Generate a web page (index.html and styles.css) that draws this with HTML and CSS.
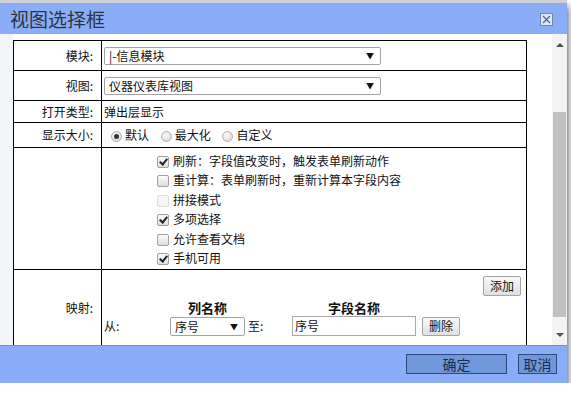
FILE: index.html
```html
<!DOCTYPE html>
<html lang="zh-CN">
<head>
  <meta charset="UTF-8">
  <title>视图选择框</title>
  <link rel="stylesheet" href="styles.css">
</head>
<body>

  <div class="dialog">
    <div class="titlebar">
      <span class="title">视图选择框</span>
      <span class="close" title="关闭">
        <svg width="13" height="13" viewBox="0 0 13 13">
          <rect x="0.5" y="0.5" width="12" height="12" fill="#dfe7f7" stroke="#7186ad"/>
          <path d="M3 3 L10 10 M10 3 L3 10" stroke="#4d5e80" stroke-width="1.2"/>
        </svg>
      </span>
    </div>

    <div class="main">
      <div class="content">
        <table class="form-table">
          <colgroup>
            <col class="col-label">
            <col>
          </colgroup>
          <tr class="row-select">
            <td class="label">模块:</td>
            <td><div class="select wide">|-信息模块<span class="arrow">▼</span></div></td>
          </tr>
          <tr class="row-select">
            <td class="label">视图:</td>
            <td><div class="select wide">仪器仪表库视图<span class="arrow">▼</span></div></td>
          </tr>
          <tr class="row-text">
            <td class="label">打开类型:</td>
            <td class="value">弹出层显示</td>
          </tr>
          <tr class="row-radio">
            <td class="label">显示大小:</td>
            <td class="value">
              <span class="radio checked"></span><span class="radio-text">默认</span>
              <span class="radio"></span><span class="radio-text">最大化</span>
              <span class="radio"></span><span class="radio-text">自定义</span>
            </td>
          </tr>
          <tr class="row-checks">
            <td></td>
            <td class="checks">
              <div class="check-line"><span class="checkbox checked"></span>刷新：字段值改变时，触发表单刷新动作</div>
              <div class="check-line"><span class="checkbox"></span>重计算：表单刷新时，重新计算本字段内容</div>
              <div class="check-line"><span class="checkbox disabled"></span>拼接模式</div>
              <div class="check-line"><span class="checkbox checked"></span>多项选择</div>
              <div class="check-line"><span class="checkbox"></span>允许查看文档</div>
              <div class="check-line"><span class="checkbox checked"></span>手机可用</div>
            </td>
          </tr>
          <tr class="row-map">
            <td class="label map-label">映射:</td>
            <td class="map-cell">
              <div class="add-line"><button class="btn">添加</button></div>
              <div class="map-line map-head">
                <span class="c-from"></span>
                <span class="c-col">列名称</span>
                <span class="c-to"></span>
                <span class="c-field">字段名称</span>
              </div>
              <div class="map-line">
                <span class="c-from">从:</span>
                <div class="select c-col small">序号<span class="arrow">▼</span></div>
                <span class="c-to">至:</span>
                <div class="input c-field">序号</div>
                <button class="btn del">删除</button>
              </div>
              <div class="map-spacer"></div>
            </td>
          </tr>
        </table>
      </div>

      <div class="scrollbar">
        <div class="sb-arrow up"></div>
        <div class="sb-track">
          <div class="sb-thumb"></div>
        </div>
        <div class="sb-arrow down"></div>
      </div>
    </div>

    <div class="footer">
      <button class="fbtn ok">确定</button>
      <button class="fbtn cancel">取消</button>
    </div>
  </div>

</body>
</html>
```

FILE: styles.css
```css
body {
  margin: 0;
  background: #ffffff;
  font-family: "Noto Sans CJK SC", "Liberation Sans", sans-serif;
  font-size: 12px;
  color: #111;
  overflow: hidden;
}

.dialog {
  width: 567px;
  height: 380px;
  border-top: 3px solid #cfd1d6;
  box-shadow: 1px 6px 7px rgba(40, 40, 60, 0.8);
  display: flex;
  flex-direction: column;
}

/* title bar */
.titlebar {
  height: 31px;
  background: #8badf7;
  display: flex;
  align-items: center;
  justify-content: space-between;
  padding: 0 14px 0 10px;
}

.title {
  font-size: 19px;
  color: #2e3340;
  line-height: 31px;
}

.close {
  display: flex;
  margin-top: 1px;
}

/* body area */
.main {
  height: 311px;
  display: flex;
  overflow: hidden;
  background: #fff;
}

.content {
  width: 552px;
  padding: 6px 0 0 13px;
  box-sizing: border-box;
  background: linear-gradient(to right, #f3f5f9 13px, #fff 13px);
}

.form-table {
  width: 514px;
  border-collapse: collapse;
  table-layout: fixed;
  background: #fff;
}

.col-label {
  width: 88px;
}

.form-table td {
  border: 1px solid #000;
  padding: 0 0 0 2px;
  line-height: 14px;
}

.form-table td.label {
  text-align: right;
  padding: 0 8px 0 0;
}

.row-select td {
  height: 29px;
}

.row-text td {
  height: 21px;
}

.row-radio td {
  height: 24px;
}

.select {
  height: 18px;
  border: 1px solid #a3a3a3;
  border-radius: 2px;
  box-sizing: border-box;
  background: #fff;
  position: relative;
  line-height: 16px;
  padding-left: 4px;
}

.select.wide {
  width: 277px;
  margin-top: 1px;
}

.arrow {
  position: absolute;
  right: 6px;
  top: 0;
  font-size: 8px;
  color: #111;
}

/* radios */
.radio {
  display: inline-block;
  width: 11px;
  height: 11px;
  border-radius: 50%;
  border: 1px solid #b0b0b0;
  background: radial-gradient(circle at 40% 35%, #fafafa, #d4d4d4);
  vertical-align: -2px;
  margin: 0 3px 0 7px;
  box-sizing: border-box;
  position: relative;
}

.radio.checked::after {
  content: "";
  position: absolute;
  left: 2px;
  top: 2px;
  width: 5px;
  height: 5px;
  border-radius: 50%;
  background: #333;
}

.radio-text {
  margin-right: 2px;
}

/* checkboxes */
.row-checks td {
  height: 118px;
  vertical-align: top;
}

.checks {
  padding: 3px 0 0 55px !important;
}

.check-line {
  height: 19.4px;
  line-height: 19px;
  white-space: nowrap;
}

.checkbox {
  display: inline-block;
  width: 12px;
  height: 12px;
  border: 1px solid #a2a2a2;
  border-radius: 2px;
  background: linear-gradient(#fbfbfb, #dedede);
  box-sizing: border-box;
  vertical-align: -2px;
  margin-right: 4px;
  position: relative;
}

.checkbox.checked::after {
  content: "";
  position: absolute;
  left: 3px;
  top: 0;
  width: 3px;
  height: 6px;
  border: solid #222;
  border-width: 0 2px 2px 0;
  transform: rotate(40deg);
}

.checkbox.disabled {
  border-color: #dcdcdc;
  background: #f6f6f6;
}

/* mapping row */
.row-map td {
  vertical-align: top;
}

.map-label {
  padding-top: 31px !important;
}

.add-line {
  text-align: right;
  padding: 6px 5px 0 0;
  height: 21px;
}

.map-line {
  display: flex;
  align-items: center;
  height: 20px;
}

.map-head {
  font-weight: bold;
  height: 16px;
  margin-top: 3px;
  font-size: 13px;
}

.c-from {
  width: 66px;
}

.c-col {
  width: 75px;
  text-align: center;
}

.select.small {
  height: 19px;
  text-align: left;
  line-height: 17px;
}

.c-to {
  width: 44px;
  margin-left: 3px;
}

.c-field {
  width: 124px;
  text-align: center;
}

.input {
  height: 20px;
  border: 1px solid #a9a9a9;
  box-sizing: border-box;
  text-align: left;
  padding-left: 2px;
  line-height: 18px;
}

.btn {
  font-family: inherit;
  font-size: 12px;
  height: 20px;
  padding: 0 6px;
  border: 1px solid #a4a4a4;
  border-radius: 2px;
  background: linear-gradient(#f9f9f9, #e0e0e0);
  color: #111;
  line-height: 16px;
}

.btn.del {
  margin-left: 6px;
  height: 19px;
}

.map-spacer {
  height: 20px;
}

/* fake scrollbar */
.scrollbar {
  width: 15px;
  background: #f3f3f3;
  display: flex;
  flex-direction: column;
}

.sb-arrow {
  height: 17px;
  position: relative;
}

.sb-arrow::after {
  content: "";
  position: absolute;
  left: 4px;
  border-left: 4px solid transparent;
  border-right: 4px solid transparent;
}

.sb-arrow.up::after {
  top: 9px;
  border-bottom: 4px solid #505050;
}

.sb-arrow.down::after {
  top: 5px;
  border-top: 4px solid #505050;
}

.sb-track {
  flex: 1;
  padding-top: 61px;
}

.sb-thumb {
  margin: 0 1px;
  height: 205px;
  background: #c1c1c1;
}

/* footer */
.footer {
  height: 38px;
  background: #8badf7;
  border-top: 1px solid #6f8fcc;
  display: flex;
  justify-content: flex-end;
  align-items: flex-start;
  padding: 8px 10px 0 0;
  box-sizing: border-box;
  gap: 11px;
}

.fbtn {
  font-family: inherit;
  font-size: 14px;
  height: 20px;
  line-height: 16px;
  border: 1px solid #2c4a7e;
  background: #6f97da;
  color: #1c2c4c;
  padding: 0;
}

.fbtn.ok {
  width: 101px;
}

.fbtn.cancel {
  width: 39px;
}
```
